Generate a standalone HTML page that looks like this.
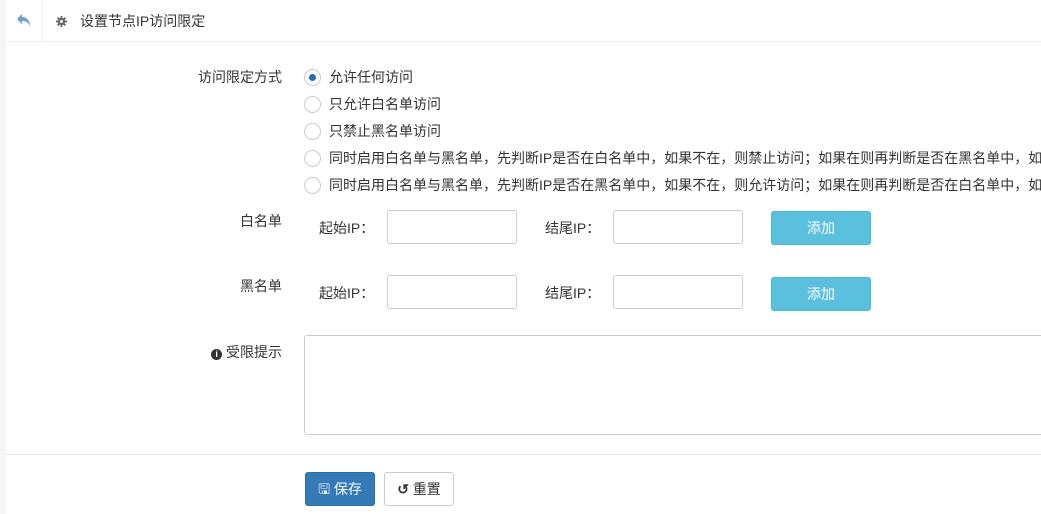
<!DOCTYPE html><html><head><meta charset="utf-8"><style>
body{margin:0;width:1041px;height:514px;overflow:hidden;background:#f5f5f5;font-family:"Liberation Sans","Noto Sans CJK SC",sans-serif;font-size:14px;color:#333;position:relative}
.wrap{position:absolute;left:0;top:0;width:1041px;height:514px;overflow:hidden}
.main{position:absolute;left:6px;top:0;right:0;bottom:0;background:#fff}
.hdr{position:absolute;left:6px;top:0;right:0;height:41px;border-bottom:1px solid #eee;background:#fff}
.a{position:absolute}
.lbl{position:absolute;right:759px;text-align:right;line-height:16px}
.r{position:absolute;left:304px;width:15px;height:15px;border:1px solid #ccc;border-radius:50%;background:#fff}
.rt{position:absolute;left:329px;white-space:nowrap;line-height:16px}
.in{position:absolute;width:128px;height:32px;border:1px solid #ccc;border-radius:3px;background:#fff}
.btn{position:absolute;left:771px;width:98px;height:32px;background:#5bc0de;border:1px solid #46b8da;border-radius:3px;color:#fff;text-align:center;line-height:32px;font-size:14px}
</style></head><body><div class="wrap">
<div class="main"></div>
<div class="hdr">
<div class="a" style="left:36px;top:0;width:1px;height:41px;background:#eee"></div>
<svg class="a" style="left:10px;top:13px" width="16" height="14" viewBox="0 0 16 14"><path d="M6 1 L1 6 L6 11 V8 C10 8 12 9 14 13 C14 8 11 4 6 4 Z" fill="#6a9fd0"/></svg>
<svg class="a" style="left:50px;top:16px" width="11" height="11" viewBox="0 0 12 12"><g fill="#666"><circle cx="6" cy="6" r="4"/><rect x="5" y="0" width="2" height="12"/><rect x="0" y="5" width="12" height="2"/><rect x="5" y="0" width="2" height="12" transform="rotate(45 6 6)"/><rect x="5" y="0" width="2" height="12" transform="rotate(-45 6 6)"/></g><circle cx="6" cy="6" r="1.6" fill="#fff"/></svg>
<span class="a" style="left:74px;top:13px;line-height:16px">设置节点IP访问限定</span>
</div>
<div class="lbl" style="top:69px">访问限定方式</div>
<div class="r" style="top:69px"></div><div class="a" style="left:309px;top:74px;width:7px;height:7px;border-radius:50%;background:#1f6fb5"></div>
<div class="rt" style="top:69px">允许任何访问</div>
<div class="r" style="top:96px"></div><div class="rt" style="top:96px">只允许白名单访问</div>
<div class="r" style="top:123px"></div><div class="rt" style="top:123px">只禁止黑名单访问</div>
<div class="r" style="top:150px"></div><div class="rt" style="top:150px">同时启用白名单与黑名单，先判断IP是否在白名单中，如果不在，则禁止访问；如果在则再判断是否在黑名单中，如果在，则禁止访问</div>
<div class="r" style="top:177px"></div><div class="rt" style="top:177px">同时启用白名单与黑名单，先判断IP是否在黑名单中，如果不在，则允许访问；如果在则再判断是否在白名单中，如果在，则允许访问</div>
<div class="lbl" style="top:213px">白名单</div>
<div class="a" style="left:319px;top:218px">起始IP：</div><div class="in" style="left:387px;top:210px"></div>
<div class="a" style="left:545px;top:218px">结尾IP：</div><div class="in" style="left:613px;top:210px"></div>
<div class="btn" style="top:211px">添加</div>
<div class="lbl" style="top:278px">黑名单</div>
<div class="a" style="left:319px;top:283px">起始IP：</div><div class="in" style="left:387px;top:275px"></div>
<div class="a" style="left:545px;top:283px">结尾IP：</div><div class="in" style="left:613px;top:275px"></div>
<div class="btn" style="top:277px">添加</div>
<div class="lbl" style="top:344px"><span style="display:inline-block;width:11px;height:11px;border-radius:50%;background:#333;color:#fff;font-size:9px;line-height:11px;text-align:center;font-weight:bold;vertical-align:0px">i</span> 受限提示</div>
<div class="a" style="left:304px;top:335px;width:760px;height:98px;border:1px solid #ccc;border-radius:3px"></div>
<div class="a" style="left:6px;top:454px;right:0;height:1px;background:#e5e5e5"></div>
<div class="a" style="left:305px;top:472px;width:68px;height:32px;background:#337ab7;border:1px solid #2e6da4;border-radius:3px;color:#fff;line-height:32px;text-align:center">🖫 保存</div>
<div class="a" style="left:384px;top:472px;width:68px;height:32px;background:#fff;border:1px solid #ccc;border-radius:3px;line-height:32px;text-align:center"><b>↺</b> 重置</div>
</div></body></html>
